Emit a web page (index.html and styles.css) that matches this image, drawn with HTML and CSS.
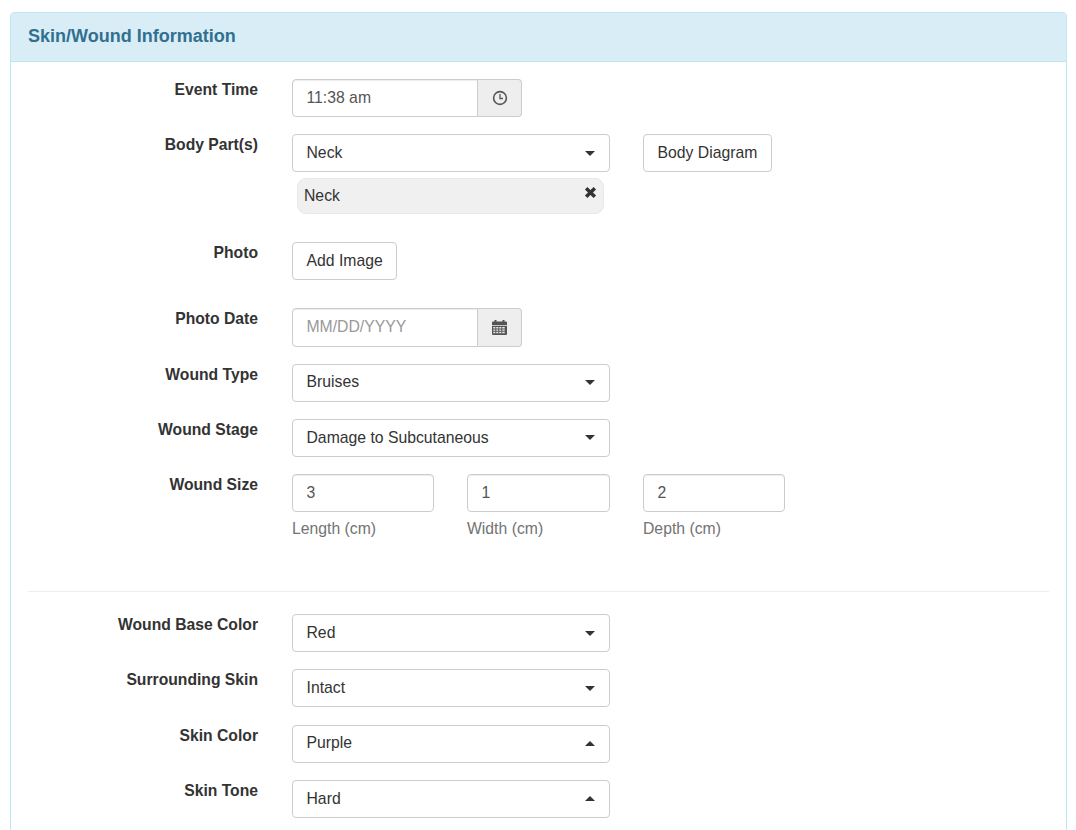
FILE: index.html
```html
<!DOCTYPE html>
<html lang="en">
<head>
    <meta charset="UTF-8">
    <title>Skin/Wound Information</title>
    <link rel="stylesheet" href="styles.css">
</head>
<body>
    <div class="panel">
        <div class="panel-heading">Skin/Wound Information</div>
        <div class="panel-body">
            <div class="row">
                <label>Event Time</label>
                <div class="input-group">
                    <input type="text" value="11:38 am">
                    <span class="addon">
                        <svg width="16" height="16" viewBox="0 0 16 16"><circle cx="8" cy="8" r="6.4" fill="none" stroke="#555" stroke-width="1.6"/><path d="M8 4v4.5h3" fill="none" stroke="#555" stroke-width="1.3"/></svg>
                    </span>
                </div>
            </div>

            <div class="row row-parts">
                <label>Body Part(s)</label>
                <div class="parts">
                    <div class="select"><span>Neck</span><i class="caret"></i></div>
                    <div class="chip">
                        <span>Neck</span>
                        <svg width="13" height="13" viewBox="0 0 12 12"><path d="M2 2l8 8M10 2l-8 8" fill="none" stroke="#333" stroke-width="3.2"/></svg>
                    </div>
                </div>
                <button class="btn btn-diagram">Body Diagram</button>
            </div>

            <div class="row row-photo">
                <label>Photo</label>
                <button class="btn">Add Image</button>
            </div>

            <div class="row row-date">
                <label>Photo Date</label>
                <div class="input-group">
                    <input type="text" placeholder="MM/DD/YYYY">
                    <span class="addon">
                        <svg width="15" height="16" viewBox="0 0 15 16"><path d="M0 3.5a1 1 0 0 1 1-1h1.5V1h2v1.5h6V1h2v1.5H14a1 1 0 0 1 1 1V6H0z" fill="#555"/><path fill-rule="evenodd" d="M0 6.8h15V15a1 1 0 0 1-1 1H1a1 1 0 0 1-1-1zM1.3 8v1.4h2V8zm3 0v1.4h2V8zm3 0v1.4h2V8zm3 0v1.4h2.4V8zm-9 2.4v1.4h2v-1.4zm3 0v1.4h2v-1.4zm3 0v1.4h2v-1.4zm3 0v1.4h2.4v-1.4zm-9 2.4v1.4h2v-1.4zm3 0v1.4h2v-1.4zm3 0v1.4h2v-1.4zm3 0v1.4h2.4v-1.4z" fill="#555"/></svg>
                    </span>
                </div>
            </div>

            <div class="row">
                <label>Wound Type</label>
                <div class="select"><span>Bruises</span><i class="caret"></i></div>
            </div>

            <div class="row">
                <label>Wound Stage</label>
                <div class="select"><span>Damage to Subcutaneous</span><i class="caret"></i></div>
            </div>

            <div class="row row-size">
                <label>Wound Size</label>
                <div class="size size-first">
                    <input type="text" value="3">
                    <small>Length (cm)</small>
                </div>
                <div class="size size-mid">
                    <input type="text" value="1">
                    <small>Width (cm)</small>
                </div>
                <div class="size size-last">
                    <input type="text" value="2">
                    <small>Depth (cm)</small>
                </div>
            </div>

            <hr>

            <div class="row">
                <label>Wound Base Color</label>
                <div class="select"><span>Red</span><i class="caret"></i></div>
            </div>

            <div class="row">
                <label>Surrounding Skin</label>
                <div class="select"><span>Intact</span><i class="caret"></i></div>
            </div>

            <div class="row">
                <label>Skin Color</label>
                <div class="select"><span>Purple</span><i class="caret caret-up"></i></div>
            </div>

            <div class="row">
                <label>Skin Tone</label>
                <div class="select"><span>Hard</span><i class="caret caret-up"></i></div>
            </div>
        </div>
    </div>
</body>
</html>
```

FILE: styles.css
```css
html, body {
    height: 830px;
    overflow: hidden;
}
body {
    margin: 0;
    padding: 12px 9px 0 10px;
    font-family: "Liberation Sans", Arial, sans-serif;
    font-size: 15.75px;
    line-height: 1.43;
    color: #333;
    background: #fff;
}
.panel {
    border: 1px solid #bce8f1;
    border-radius: 4px;
    height: 900px;
}
.panel-heading {
    height: 48px;
    padding: 0 17px;
    line-height: 47px;
    font-size: 18px;
    font-weight: bold;
    color: #31708f;
    background: #d9edf7;
    border-bottom: 1px solid #bce8f1;
    border-radius: 3px 3px 0 0;
}
.panel-body {
    padding: 16.8px 17px;
}
.row {
    display: flex;
    align-items: flex-start;
    margin-bottom: 17.3px;
}
.row label {
    flex: 0 0 230px;
    margin-right: 34px;
    padding-top: 1px;
    text-align: right;
    font-size: 15.7px;
    font-weight: bold;
    line-height: 20px;
}
.row-parts {
    margin-bottom: 28px;
}
.row-photo {
    margin-bottom: 28px;
}
.row-date {
    margin-bottom: 17px;
}
.row-date input, .row-date .addon {
    height: 38.6px;
}
.row-size {
    margin-bottom: 0;
}
input {
    display: block;
    box-sizing: border-box;
    height: 38px;
    padding: 0 13.5px;
    font: inherit;
    color: #555;
    background: #fff;
    border: 1px solid #ccc;
    border-radius: 4px;
    box-shadow: inset 0 1px 1px rgba(0, 0, 0, .075);
    outline: none;
}
input::placeholder {
    color: #999;
    opacity: 1;
}
.input-group {
    display: flex;
    width: 230px;
}
.input-group input {
    flex: 1;
    min-width: 0;
    border-radius: 4px 0 0 4px;
}
.addon {
    display: flex;
    align-items: center;
    justify-content: center;
    box-sizing: border-box;
    width: 44px;
    height: 38px;
    background: #eee;
    border: 1px solid #ccc;
    border-left: 0;
    border-radius: 0 4px 4px 0;
}
.select {
    display: flex;
    align-items: center;
    justify-content: space-between;
    box-sizing: border-box;
    width: 318px;
    height: 38px;
    padding: 0 14px 0 13.5px;
    background: #fff;
    border: 1px solid #ccc;
    border-radius: 4px;
}
.caret {
    width: 0;
    height: 0;
    border-top: 5px solid #333;
    border-left: 5px solid transparent;
    border-right: 5px solid transparent;
}
.caret-up {
    border-top: 0;
    border-bottom: 5px solid #333;
}
.parts {
    width: 318px;
}
.chip {
    display: flex;
    justify-content: space-between;
    box-sizing: border-box;
    width: 307px;
    height: 36px;
    margin: 6px 0 0 5px;
    padding: 6px 6px 0 6px;
    background: #f0f0f0;
    border: 1px solid #e8e8e8;
    border-radius: 9px;
}
.chip svg {
    margin-top: 1px;
}
.btn {
    display: block;
    box-sizing: border-box;
    height: 38px;
    padding: 0 13.5px;
    font: inherit;
    color: #333;
    background: #fff;
    border: 1px solid #ccc;
    border-radius: 4px;
}
.btn-diagram {
    margin-left: 33px;
}
.size input {
    width: 100%;
}
.size small {
    display: block;
    margin-top: 6px;
    font-size: 15.75px;
    color: #737373;
}
.size-first {
    width: 142px;
}
.size-mid {
    width: 143px;
    margin-left: 33px;
}
.size-last {
    width: 142px;
    margin-left: 33px;
}
hr {
    height: 1px;
    margin: 50px 0 22.3px;
    background: #eee;
    border: 0;
}
```
